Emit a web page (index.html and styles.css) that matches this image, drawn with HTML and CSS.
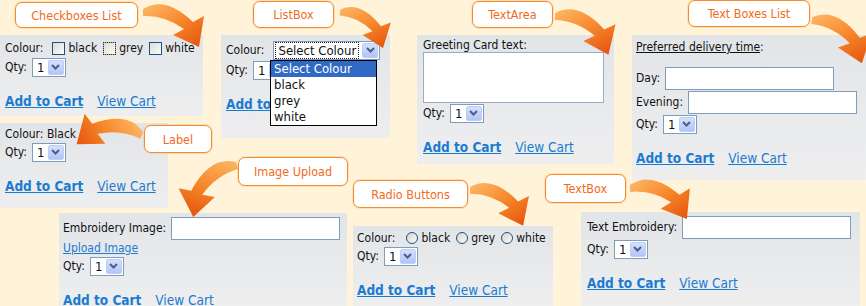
FILE: index.html
```html
<!DOCTYPE html>
<html lang="en">
<head>
    <meta charset="UTF-8">
    <title>Product option controls</title>
    <link rel="stylesheet" href="styles.css">
</head>
<body>
<div class="board">

    <!-- Checkboxes List -->
    <div class="panel p-check">
        <div class="row checks">Colour:
            <span class="opts">
                <span class="opt"><i class="cb"></i>black</span>
                <span class="opt"><i class="cb focus"></i>grey</span>
                <span class="opt"><i class="cb"></i>white</span>
            </span>
        </div>
        <div class="row qty">Qty:
            <span class="sel"><span class="val">1</span><span class="btn"><svg width="9" height="6" viewBox="0 0 9 6"><path d="M1 1l3.5 3.5L8 1" fill="none" stroke="#4b5e86" stroke-width="2"/></svg></span></span>
        </div>
        <div class="actions"><a href="#" class="add">Add to Cart</a><a href="#">View Cart</a></div>
    </div>

    <!-- ListBox -->
    <div class="panel p-list">
        <div class="row qty">Colour:
            <span class="sel wide"><span class="val"><span class="focus-text">Select Colour</span></span><span class="btn"><svg width="9" height="6" viewBox="0 0 9 6"><path d="M1 1l3.5 3.5L8 1" fill="none" stroke="#4b5e86" stroke-width="2"/></svg></span></span>
        </div>
        <div class="row qty">Qty:
            <span class="sel"><span class="val">1</span><span class="btn"><svg width="9" height="6" viewBox="0 0 9 6"><path d="M1 1l3.5 3.5L8 1" fill="none" stroke="#4b5e86" stroke-width="2"/></svg></span></span>
        </div>
        <div class="actions"><a href="#" class="add">Add to Cart</a><a href="#">View Cart</a></div>
        <ul class="drop">
            <li class="on">Select Colour</li>
            <li>black</li>
            <li>grey</li>
            <li>white</li>
        </ul>
    </div>

    <!-- TextArea -->
    <div class="panel p-area">
        <div class="row lbl">Greeting Card text:</div>
        <div class="area"></div>
        <div class="row qty">Qty:
            <span class="sel"><span class="val">1</span><span class="btn"><svg width="9" height="6" viewBox="0 0 9 6"><path d="M1 1l3.5 3.5L8 1" fill="none" stroke="#4b5e86" stroke-width="2"/></svg></span></span>
        </div>
        <div class="actions"><a href="#" class="add">Add to Cart</a><a href="#">View Cart</a></div>
    </div>

    <!-- Text Boxes List -->
    <div class="panel p-boxes">
        <div class="row"><span class="u">Preferred delivery time</span>:</div>
        <div class="row field first">Day: <span class="inp"></span></div>
        <div class="row field">Evening: <span class="inp"></span></div>
        <div class="row qty">Qty:
            <span class="sel"><span class="val">1</span><span class="btn"><svg width="9" height="6" viewBox="0 0 9 6"><path d="M1 1l3.5 3.5L8 1" fill="none" stroke="#4b5e86" stroke-width="2"/></svg></span></span>
        </div>
        <div class="actions"><a href="#" class="add">Add to Cart</a><a href="#">View Cart</a></div>
    </div>

    <!-- Label -->
    <div class="panel p-label">
        <div class="row">Colour: Black</div>
        <div class="row qty">Qty:
            <span class="sel"><span class="val">1</span><span class="btn"><svg width="9" height="6" viewBox="0 0 9 6"><path d="M1 1l3.5 3.5L8 1" fill="none" stroke="#4b5e86" stroke-width="2"/></svg></span></span>
        </div>
        <div class="actions"><a href="#" class="add">Add to Cart</a><a href="#">View Cart</a></div>
    </div>

    <!-- Image Upload -->
    <div class="panel p-upload">
        <div class="row field">Embroidery Image: <span class="inp"></span></div>
        <div class="row"><a href="#" class="small">Upload Image</a></div>
        <div class="row qty">Qty:
            <span class="sel"><span class="val">1</span><span class="btn"><svg width="9" height="6" viewBox="0 0 9 6"><path d="M1 1l3.5 3.5L8 1" fill="none" stroke="#4b5e86" stroke-width="2"/></svg></span></span>
        </div>
        <div class="actions"><a href="#" class="add">Add to Cart</a><a href="#">View Cart</a></div>
    </div>

    <!-- Radio Buttons -->
    <div class="panel p-radio">
        <div class="row radios">Colour:
            <span class="opts">
                <span class="opt"><i class="rb"></i>black</span>
                <span class="opt"><i class="rb"></i>grey</span>
                <span class="opt"><i class="rb"></i>white</span>
            </span>
        </div>
        <div class="row qty">Qty:
            <span class="sel"><span class="val">1</span><span class="btn"><svg width="9" height="6" viewBox="0 0 9 6"><path d="M1 1l3.5 3.5L8 1" fill="none" stroke="#4b5e86" stroke-width="2"/></svg></span></span>
        </div>
        <div class="actions"><a href="#" class="add">Add to Cart</a><a href="#">View Cart</a></div>
    </div>

    <!-- TextBox -->
    <div class="panel p-text">
        <div class="row field">Text Embroidery: <span class="inp"></span></div>
        <div class="row qty">Qty:
            <span class="sel"><span class="val">1</span><span class="btn"><svg width="9" height="6" viewBox="0 0 9 6"><path d="M1 1l3.5 3.5L8 1" fill="none" stroke="#4b5e86" stroke-width="2"/></svg></span></span>
        </div>
        <div class="actions"><a href="#" class="add">Add to Cart</a><a href="#">View Cart</a></div>
    </div>

    <!-- callout labels -->
    <div class="tag t-check">Checkboxes List</div>
    <div class="tag t-list">ListBox</div>
    <div class="tag t-area">TextArea</div>
    <div class="tag t-boxes">Text Boxes List</div>
    <div class="tag t-label">Label</div>
    <div class="tag t-upload">Image Upload</div>
    <div class="tag t-radio">Radio Buttons</div>
    <div class="tag t-text">TextBox</div>

    <!-- curved arrows -->
    <svg class="arrows" width="866" height="306" viewBox="0 0 866 306">
        <defs>
            <linearGradient id="ag" x1="0" y1="0" x2="1" y2="1">
                <stop offset="0" stop-color="#fdba6a"/>
                <stop offset="0.5" stop-color="#f7872b"/>
                <stop offset="1" stop-color="#e3500b"/>
            </linearGradient>
            <path id="arr" d="M0,-3 Q22,-17 50,10 L61,4 L56,35 L30,23 L41,17 Q22,3 0,4 Z" fill="url(#ag)"/>
        </defs>
        <use href="#arr" transform="translate(143,12)"/>
        <use href="#arr" transform="translate(340,12) rotate(8) scale(0.85)"/>
        <use href="#arr" transform="translate(555,16) rotate(4)"/>
        <use href="#arr" transform="translate(812,20) rotate(9)"/>
        <use href="#arr" transform="translate(142,135) scale(-1,1) rotate(-24)"/>
        <use href="#arr" transform="translate(237,165) scale(-1,1) rotate(18) scale(1.03)"/>
        <use href="#arr" transform="translate(470,190) rotate(2) scale(0.97)"/>
        <use href="#arr" transform="translate(630,188) rotate(-3.5) scale(0.98)"/>
    </svg>
</div>
</body>
</html>
```

FILE: styles.css
```css
* {
    padding: 0;
    margin: 0;
    box-sizing: border-box;
}
body {
    background: #fff4d9;
    font-family: "DejaVu Sans Condensed", "DejaVu Sans", sans-serif;
    font-stretch: condensed;
    font-size: 12px;
    color: #111;
}
.board {
    position: relative;
    width: 866px;
    height: 306px;
    overflow: hidden;
}

/* panels */
.panel {
    position: absolute;
    background: linear-gradient(#e2e5e8, #eeeeef);
    padding: 4px 5px 0;
}
.p-check { left: 0; top: 35px; width: 203px; height: 81px; }
.p-list { left: 221px; top: 35px; width: 169px; height: 103px; padding-top: 5px; }
.p-area { left: 417px; top: 35px; width: 197px; height: 129px; padding: 2px 6px 0; }
.p-boxes { left: 632px; top: 35px; width: 234px; height: 145px; padding-left: 4px; }
.p-label { left: 0; top: 123px; width: 168px; height: 85px; padding-top: 3px; }
.p-upload { left: 59px; top: 213px; width: 288px; height: 93px; padding: 3px 4px 0; }
.p-radio { left: 353px; top: 226px; width: 200px; height: 80px; padding: 3px 4px 0; }
.p-text { left: 581px; top: 212px; width: 279px; height: 94px; padding: 3px 6px 0; }

.row {
    display: flex;
    align-items: center;
    height: 16px;
    white-space: nowrap;
}
.row.lbl { height: 15px; }
.row.checks { height: 18px; }
.row.radios { height: 17px; }
.row.qty { height: 20px; }
.row.field { height: 24px; }
.row.field.first { margin-top: 11px; }
.u { text-decoration: underline; }

/* checkbox / radio options */
.opts {
    display: flex;
    align-items: center;
    margin-left: 9px;
    gap: 6px;
}
.p-radio .opts { margin-left: 11px; gap: 6px; }
.opt {
    display: flex;
    align-items: center;
    gap: 3px;
}
.cb {
    display: block;
    width: 13px;
    height: 13px;
    border: 1px solid #1c5180;
    background: linear-gradient(135deg, #dcdcd7, #fbfbf8);
}
.cb.focus {
    outline: 1px dotted #333;
    outline-offset: -1px;
    border-color: #c9a47a;
}
.rb {
    display: block;
    width: 12px;
    height: 12px;
    border: 1px solid #1c5180;
    border-radius: 50%;
    background: linear-gradient(135deg, #d6d6d0, #fbfbf8);
}

/* dropdown */
.sel {
    display: inline-flex;
    align-items: center;
    justify-content: space-between;
    width: 34px;
    height: 19px;
    margin-left: 5px;
    padding: 1px;
    border: 1px solid #7f9db9;
    background: #fff;
    font-size: 13px;
}
.sel .val { padding-left: 3px; }
.sel.wide { width: 107px; margin-left: 9px; }
.sel.wide .val { padding-left: 1px; }
.focus-text {
    outline: 1px dotted #222;
    padding: 0 2px;
}
.btn {
    display: flex;
    align-items: center;
    justify-content: center;
    width: 16px;
    height: 15px;
    background: linear-gradient(#d4e0fd, #b2c5f6);
    border: 1px solid #bccdf6;
    border-radius: 2px;
}
.drop {
    position: absolute;
    left: 49px;
    top: 25px;
    width: 107px;
    list-style: none;
    background: #fff;
    border: 1px solid #000;
    font-size: 13px;
}
.drop li {
    height: 16px;
    line-height: 16px;
    padding-left: 3px;
}
.drop li.on {
    background: #316ac5;
    color: #fff;
}

/* inputs */
.inp {
    display: block;
    width: 169px;
    height: 23px;
    margin-left: 5px;
    border: 1px solid #7f9db9;
    background: #fff;
}
.area {
    width: 181px;
    height: 51px;
    border: 1px solid #98aec6;
    background: #fff;
}

/* links */
a { color: #1b7bd0; }
a.small { font-size: 12px; }
.actions {
    display: flex;
    align-items: center;
    gap: 14px;
    height: 20px;
    margin-top: 14px;
    font-size: 13.5px;
}
.add { font-weight: bold; }

/* callouts */
.tag {
    position: absolute;
    display: flex;
    align-items: center;
    justify-content: center;
    background: #fff;
    border: 1px solid #f58b2c;
    border-radius: 7px;
    box-shadow: 0 0 0 1px rgba(250, 185, 120, .35);
    color: #f06b1e;
    font-size: 12.5px;
}
.t-check { left: 15px; top: 2px; width: 123px; height: 26px; }
.t-list { left: 253px; top: 1px; width: 81px; height: 27px; }
.t-area { left: 472px; top: 1px; width: 81px; height: 27px; }
.t-boxes { left: 688px; top: 0; width: 122px; height: 27px; }
.t-label { left: 144px; top: 125px; width: 68px; height: 28px; }
.t-upload { left: 238px; top: 157px; width: 110px; height: 29px; }
.t-radio { left: 353px; top: 180px; width: 115px; height: 28px; }
.t-text { left: 545px; top: 174px; width: 81px; height: 29px; }

.arrows {
    position: absolute;
    left: 0;
    top: 0;
    pointer-events: none;
}
```
